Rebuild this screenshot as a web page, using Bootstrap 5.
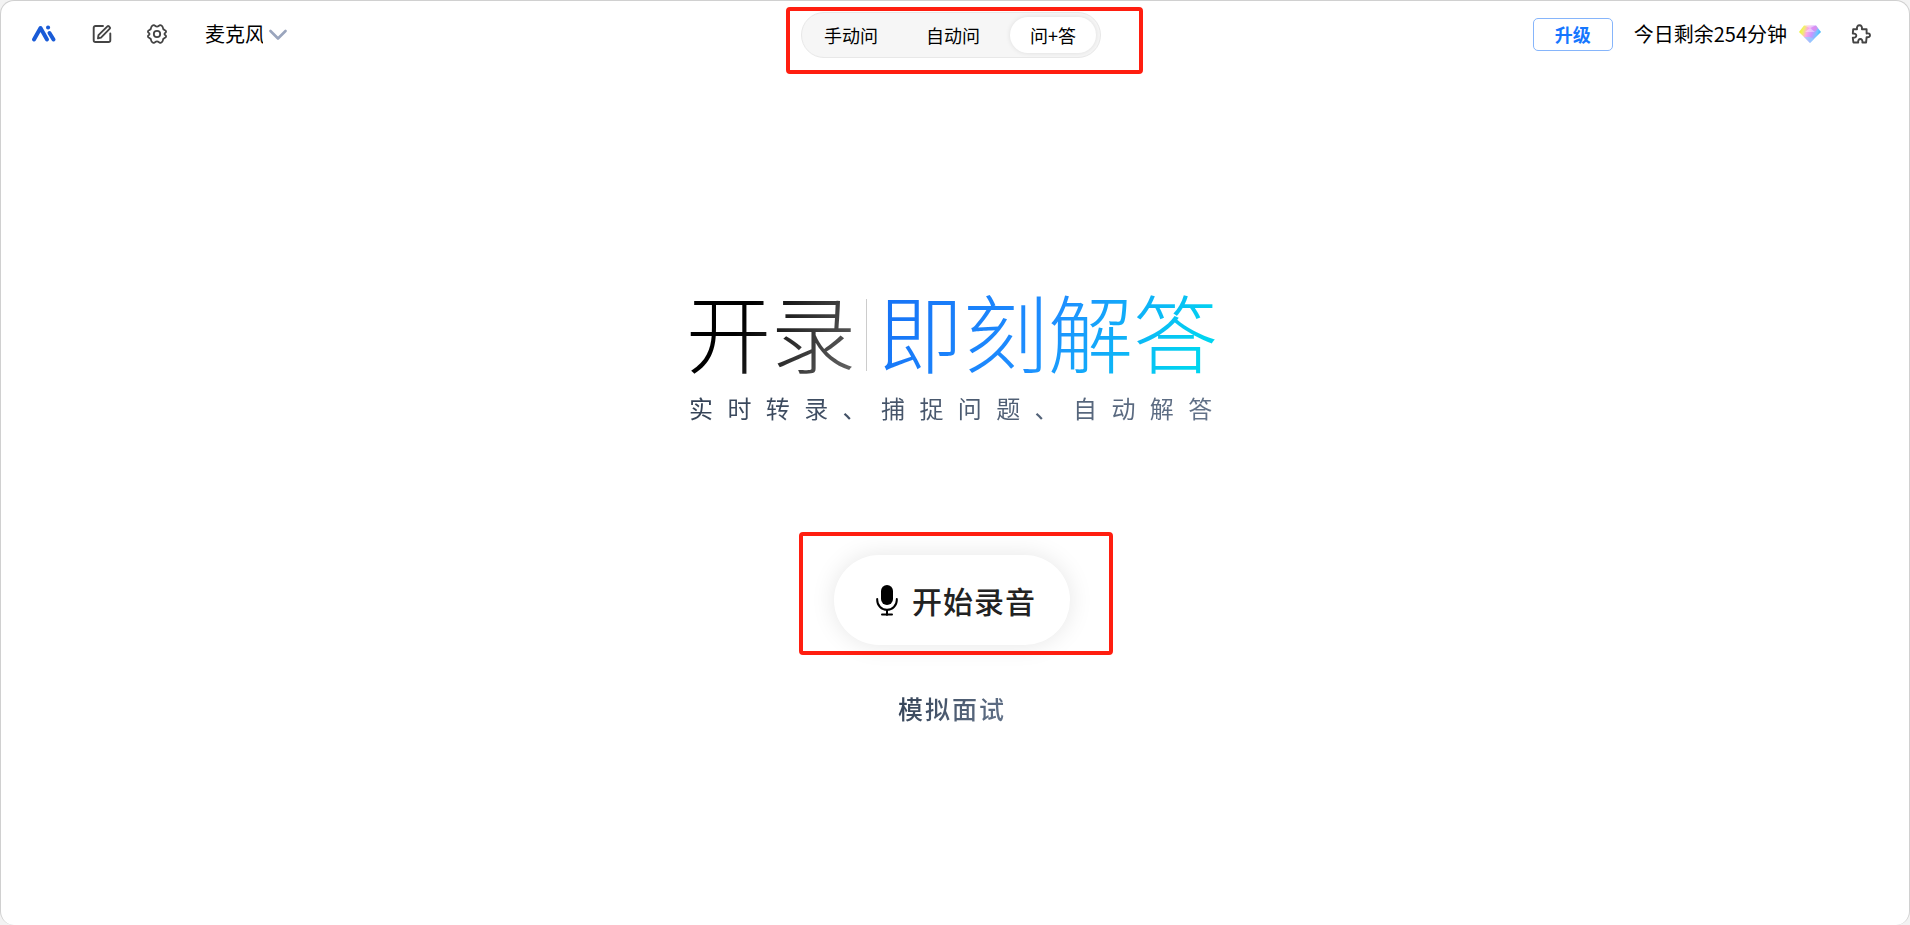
<!DOCTYPE html>
<html lang="zh-CN">
<head>
<meta charset="utf-8">
<meta name="viewport" content="width=device-width, initial-scale=1">
<title>开录 即刻解答</title>
<link href="https://cdn.jsdelivr.net/npm/bootstrap@5.3.0/dist/css/bootstrap.min.css" rel="stylesheet">
<style>
body{background:#f3f3f3;color:#000;font-family:"Noto Sans CJK SC",sans-serif}
.app-frame{background:#fff;border:1px solid #d0d0d0;border-bottom:0;border-radius:14px}
.app-bar{display:grid;grid-template-columns:1fr auto 1fr;align-items:center;height:68px;padding:0 38px 0 30px}
.bar-side{font-size:20px;line-height:30px;padding-bottom:2px}
.icon-btn{border:0;background:none;padding:0;display:flex}
.tool-row{gap:35px}
.source-pick{position:relative;display:flex;align-items:center;margin-left:3px}
.source-pick select{appearance:none;border:0;background:none;padding:0 24px 0 0;width:82px;color:#000}
.source-pick svg{position:absolute;right:0;top:10px;pointer-events:none}
.mode-tabs{background:#f6f6f6;border:1px solid #e8e8e8;border-radius:23px;height:46px;padding:4px;gap:12px;font-size:18px;line-height:26px;position:relative}
.mode-tabs button{border:0;background:none;border-radius:18px;height:36px;padding:0 18px;color:#000}
.mode-tabs button.on{background:#fff;box-shadow:0 0 5px rgba(0,0,0,.1);padding:0 20px}
.upgrade{width:80px;height:33px;border:1px solid #86b5fb;border-radius:5px;background:#fff;color:#1677ff;font-size:18px;line-height:26px;font-weight:700;padding:0}
.quota{margin:0 30px 0 21px;gap:12px}
.marker{position:absolute;border:4px solid #ff1e10;border-radius:4px;pointer-events:none}
.mode-tabs .marker{inset:-6px -43px -17px -16px}
.rec-wrap .marker{inset:-23px -43px -10px -35px}
.hero-title{font-size:85px;line-height:80px;font-weight:300}
.grad{background-clip:text;-webkit-background-clip:text;color:transparent}
.hero-title .grad{margin:-10px 0;padding:10px 0}
.t-dark{background-image:linear-gradient(120deg,#000 35%,#6b6b6b)}
.t-blue{background-image:linear-gradient(120deg,#1670f5,#1e8fff 50%,#00d4f0 90%)}
.t-rule{width:1px;height:72px;background:#ccc;margin:9px 11px 0 10px}
.t-slate{background-image:linear-gradient(120deg,#334155,#64748b)}
.sub-line{font-size:24px;line-height:36px;letter-spacing:.6em;margin:19px -14px 129px 3px;white-space:nowrap}
.rec-btn{height:90px;width:236px;border:0;border-radius:45px;background:#fff;box-shadow:0 0 24px rgba(0,0,0,.1);font-size:30px;font-weight:500;letter-spacing:1px;color:#222;gap:14px;padding:0 0 0 8px}
.mock-link{font-size:25px;line-height:36px;font-weight:500;letter-spacing:2px;margin-top:45px}
.app-main{padding:22px 6px 0 0}
</style>
</head>
<body>
<div class="app-frame min-vh-100 d-flex flex-column">
  <header class="app-bar">
    <div class="bar-side tool-row d-flex align-items-center">
      <a href="#" aria-label="首页" class="d-flex"><svg width="26" height="18" viewBox="0 0 26 18" fill="none" stroke="#195bd7" stroke-width="4" stroke-linecap="round" stroke-linejoin="round"><path d="M3 14.5 9.5 3l6.500 11.500M18.500 8l4 6.500"/><path d="M17 2.500h.1"/></svg></a>
      <button class="icon-btn" aria-label="新建"><svg width="20" height="20" viewBox="0 0 20 20" fill="none" stroke="#444" stroke-width="1.900" stroke-linecap="round" stroke-linejoin="round"><path d="M11 2H3.500A1.800 1.800 0 0 0 1.700 3.800v12.400A1.800 1.800 0 0 0 3.500 18h13a1.800 1.800 0 0 0 1.800-1.800V9.500"/><path d="m6.500 11.200 8.900-8.900a1 1 0 0 1 1.400 0l1 1a1 1 0 0 1 0 1.400l-8.800 8.900-3 .8z"/></svg></button>
      <button class="icon-btn" aria-label="设置"><svg width="20" height="20" viewBox="0 0 20 20" fill="none" stroke="#444" stroke-width="1.800" stroke-linejoin="round"><path d="M6 1.300Q7.300.8 8 1.800q2 1.500 4 0 .7-1 2-.5 1.600.8 1.800 2.100-.1 2 2 2.800 1.300.4 1.300 1.500-.1 1-1 1.300-1.200 1 0 2 .9.400 1 1.300 0 1.100-1.300 1.500-2.100.8-2 2.800-.2 1.300-1.800 2.100-1.300.5-2-.5-2-1.500-4 0-.7 1-2 .5-1.600-.8-1.800-2.100.1-2-2-2.800Q.9 13.400.9 12.300q.1-.9 1-1.300 1.200-1 0-2-.9-.3-1-1.300 0-1.100 1.300-1.500 2.100-.8 2-2.800Q4.400 2.100 6 1.300z"/><circle cx="10" cy="10" r="3.200"/></svg></button>
      <div class="source-pick"><select aria-label="音频来源"><option>麦克风</option></select><svg width="18" height="12" viewBox="0 0 18 12" fill="none" stroke="#9aa5bd" stroke-width="2.600" stroke-linecap="round" stroke-linejoin="round"><path d="m1.500 2 7.500 7.500L16.500 2"/></svg></div>
    </div>
    <nav class="mode-tabs d-flex align-items-center" aria-label="模式">
      <button>手动问</button><button>自动问</button><button class="on">问+答</button>
      <span class="marker"></span>
    </nav>
    <div class="bar-side d-flex align-items-center justify-content-end">
      <button class="upgrade">升级</button>
      <span class="quota d-flex align-items-center"><span>今日剩余254分钟</span>
      <svg width="22" height="20" viewBox="0 0 22 20"><defs><linearGradient id="gem" gradientUnits="userSpaceOnUse" x1="0" y1="3" x2="22" y2="10"><stop offset="0" stop-color="#e6f522"/><stop offset=".22" stop-color="#f3f06a"/><stop offset=".4" stop-color="#fba6ea"/><stop offset=".62" stop-color="#c795ff"/><stop offset=".82" stop-color="#74c4ff"/><stop offset="1" stop-color="#35b2f5"/></linearGradient></defs><path fill="url(#gem)" d="M5 1.500h12L22 8 11 19 0 8z"/><path fill="#fff" opacity=".4" d="m5 1.500 6 2.500 6-2.500zM6 8l5-4 5 4z"/><path fill="#7fe3ff" opacity=".55" d="m5 13 6 6 4-4-4-2z"/><path fill="#ff7fe0" opacity=".5" d="m13 4 4-2.500 2 3-3 3.500z"/></svg></span>
      <button class="icon-btn" aria-label="扩展"><svg width="20" height="20" viewBox="0 0 20 20" fill="none" stroke="#444" stroke-width="1.900" stroke-linejoin="round"><path d="M2.200 5.200H6C5.600 2.700 6.800 1.300 8.500 1.300s2.800 1.400 2.400 3.900h4.700v4.300c2.200-.5 3.400.4 3.400 1.800s-1.200 2.300-3.400 1.800l-.5 5.400h-3.700c.3-2.300-.6-3.500-2.100-3.500s-2.400 1.200-2.100 3.500H2.400l-.6-4.700c2.400.1 3.500-.8 3.500-2.200S4.200 9.400 1.800 9.500z"/></svg></button>
    </div>
  </header>
  <main class="app-main flex-grow-1 d-flex flex-column align-items-center justify-content-center">
    <div class="d-flex flex-column">
      <h1 class="hero-title d-flex m-0"><span class="grad t-dark">开录</span><span class="t-rule"></span><span class="grad t-blue">即刻解答</span></h1>
      <p class="sub-line grad t-slate">实时转录、捕捉问题、自动解答</p>
    </div>
    <div class="rec-wrap position-relative">
      <button class="rec-btn d-flex align-items-center justify-content-center"><svg width="22" height="31" viewBox="0 0 22 31"><rect x="5" y="0" width="12" height="20" rx="6"/><path d="M1.200 14v1a9.800 9.800 0 0 0 19.600 0v-1M11 25v5M6 29.500h10" fill="none" stroke="#000" stroke-width="2" stroke-linecap="round"/></svg><span>开始录音</span></button>
      <span class="marker"></span>
    </div>
    <a href="#" class="mock-link grad t-slate text-decoration-none">模拟面试</a>
  </main>
</div>
<script src="https://cdn.jsdelivr.net/npm/bootstrap@5.3.0/dist/js/bootstrap.bundle.min.js"></script>
</body>
</html>
